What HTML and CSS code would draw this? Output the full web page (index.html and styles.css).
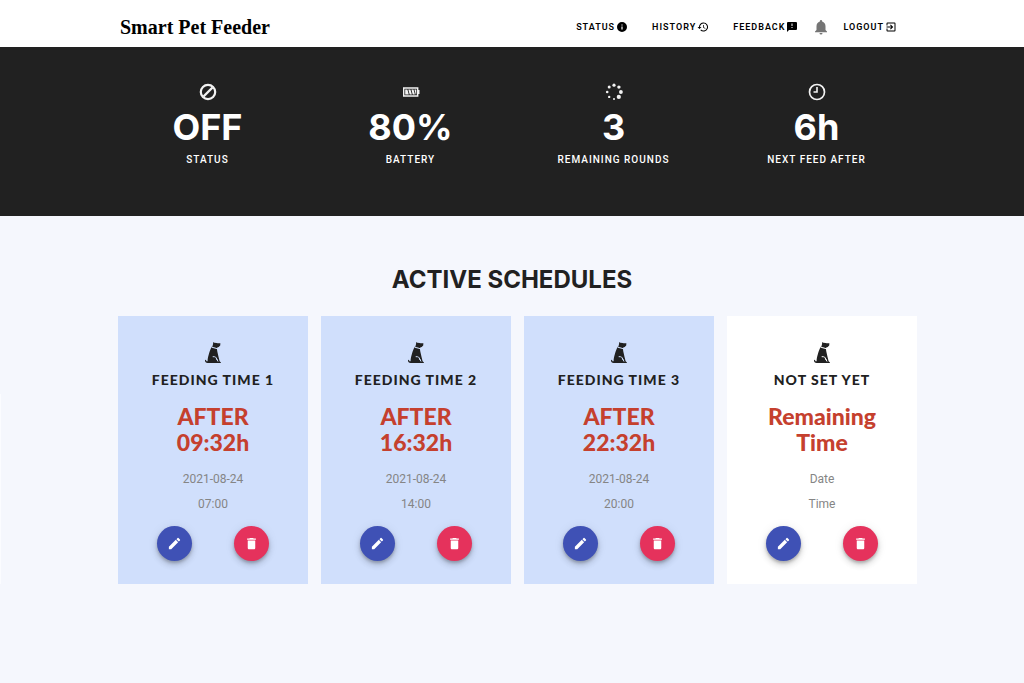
FILE: index.html
```
<!DOCTYPE html>
<html lang="en">
<head>
<meta charset="utf-8">
<meta name="viewport" content="width=device-width, initial-scale=1">
<title>Smart Pet Feeder</title>
<link rel="stylesheet" href="styles.css">
</head>
<body>
<svg class="sprite" aria-hidden="true">
  <symbol id="dog" viewBox="0 0 16 21">
    <path d="M8.300 0l1 .8 2.200.1 1.200.3 2.700.1-.2 2.200-1.500 1.600-1.500.4-.2 1-4.800-1.500.7-2.300z"/>
    <path d="M6.800 4.700l5 1.500.5 3.200 1.300 5.800 1 4 1.400 1.200-.2.600H2.600C.9 21 0 19.900 0 18.500c0-.8 1-.9 1.200-.1.100.7.600 1.100 1.400.9 0-2.900.6-4.800 1.300-7.200.8-2.800 1.500-5.200 2.900-7.400z"/>
    <path class="dog-line" d="M6.700 5.200l5.300 1.400M7.700 14.700c2.500-.3 3.800.7 4 2.300l1.300 2.500M11.300 16.500l1 1.500"/>
  </symbol>
  <symbol id="pencil" viewBox="0 0 24 24"><path d="M3 17.250V21h3.750L17.810 9.940l-3.750-3.750L3 17.250zM20.710 7.040a1 1 0 0 0 0-1.410l-2.340-2.340a1 1 0 0 0-1.410 0l-1.830 1.830 3.750 3.750 1.830-1.830z"/></symbol>
  <symbol id="trash" viewBox="0 0 24 24"><path d="M6 19c0 1.100.9 2 2 2h8c1.100 0 2-.9 2-2V7H6v12zM19 4h-3.500l-1-1h-5l-1 1H5v2h14V4z"/></symbol>
</svg>

<header class="topbar">
  <div class="container topbar-inner">
    <a class="brand" href="#">Smart Pet Feeder</a>
    <nav class="menu">
      <a class="menu-link" href="#">STATUS
        <svg class="menu-icon" viewBox="0 0 24 24"><path d="M12 2a10 10 0 1 0 0 20 10 10 0 0 0 0-20zm1.200 15h-2.400v-6h2.400v6zm0-8h-2.400V6.800h2.400V9z"/></svg></a>
      <a class="menu-link" href="#">HISTORY
        <svg class="menu-icon" viewBox="0 0 24 24"><path d="M13 3a9 9 0 0 0-9 9H1l3.890 3.890.07.14L9 12H6a7 7 0 1 1 2.060 4.940l-1.420 1.420A9 9 0 1 0 13 3zm-1 5v5l4.280 2.540.72-1.210-3.500-2.080V8H12z"/></svg></a>
      <a class="menu-link" href="#">FEEDBACK
        <svg class="menu-icon" viewBox="0 0 24 24"><path d="M20 2H4a2 2 0 0 0-2 2v18l4-4h14a2 2 0 0 0 2-2V4a2 2 0 0 0-2-2zm-7 12h-2v-2h2v2zm0-4h-2V5h2v5z"/></svg></a>
      <button class="bell" type="button" aria-label="Notifications">
        <svg viewBox="0 0 24 24"><path d="M12 22a2 2 0 0 0 2-2h-4a2 2 0 0 0 2 2zm6-6v-5c0-3.070-1.640-5.640-4.500-6.320V4a1.500 1.500 0 0 0-3 0v.68C7.630 5.360 6 7.920 6 11v5l-2 2v1h16v-1l-2-2z"/></svg></button>
      <a class="menu-link" href="#">LOGOUT
        <svg class="menu-icon" viewBox="0 0 24 24"><path d="M10.090 15.590L11.500 17l5-5-5-5-1.410 1.410L12.670 11H3v2h9.670l-2.580 2.590zM19 3H5a2 2 0 0 0-2 2v4h2V5h14v14H5v-4H3v4a2 2 0 0 0 2 2h14a2 2 0 0 0 2-2V5a2 2 0 0 0-2-2z"/></svg></a>
    </nav>
  </div>
</header>

<section class="stats">
  <div class="container columns">
    <div class="stat">
      <svg class="stat-icon" viewBox="0 0 18 18"><circle cx="9" cy="9" r="7.200" fill="none" stroke="currentColor" stroke-width="2.200"/><path d="M4.500 13.500l9-9" stroke="currentColor" stroke-width="2.400"/></svg>
      <strong class="stat-value">OFF</strong><span class="stat-label">STATUS</span>
    </div>
    <div class="stat">
      <svg class="stat-icon" viewBox="0 0 18 18"><path d="M1.700 5h14v8h-14z" fill="none" stroke="currentColor" stroke-width="1.400"/><path d="M16 7h1.500v4H16zM3.200 6.600h2.200l1.400 4.800H3.200zM6.300 6.600h2.100l1.500 4.800H7.700zM9.400 6.600h2.100l1.400 4.800h-2.200zM12.400 6.600h1.900v4.800h-.6z"/></svg>
      <strong class="stat-value">80%</strong><span class="stat-label">BATTERY</span>
    </div>
    <div class="stat">
      <svg class="stat-icon" viewBox="0 0 18 18"><circle cx="9" cy="2.200" r="1.600"/><circle cx="13.900" cy="4.100" r="1.700"/><circle cx="15.900" cy="9" r="1.900"/><circle cx="13.800" cy="13.900" r="2.100"/><circle cx="9" cy="15.900" r="1"/><circle cx="4.200" cy="13.900" r="1.200"/><circle cx="2.200" cy="9" r="1.300"/><circle cx="4.200" cy="4.100" r="1.500"/></svg>
      <strong class="stat-value">3</strong><span class="stat-label">REMAINING ROUNDS</span>
    </div>
    <div class="stat">
      <svg class="stat-icon" viewBox="0 0 18 18"><circle cx="9" cy="9" r="7.500" fill="none" stroke="currentColor" stroke-width="1.700"/><path d="M9 4v5H5.500" fill="none" stroke="currentColor" stroke-width="1.600"/></svg>
      <strong class="stat-value">6h</strong><span class="stat-label">NEXT FEED AFTER</span>
    </div>
  </div>
</section>

<main class="schedules">
  <h1 class="title">ACTIVE SCHEDULES</h1>
  <div class="carousel">
    <div class="peek"></div>
    <div class="container columns">
      <article class="card card-active">
        <svg class="dog"><use href="#dog"/></svg>
        <h2 class="card-name">FEEDING TIME 1</h2>
        <p class="remaining">AFTER<br>09:32h</p>
        <p class="when">2021-08-24</p><p class="when">07:00</p>
        <div class="actions"><button class="fab edit" type="button" aria-label="Edit"><svg><use href="#pencil"/></svg></button><button class="fab delete" type="button" aria-label="Delete"><svg><use href="#trash"/></svg></button></div>
      </article>
      <article class="card card-active">
        <svg class="dog"><use href="#dog"/></svg>
        <h2 class="card-name">FEEDING TIME 2</h2>
        <p class="remaining">AFTER<br>16:32h</p>
        <p class="when">2021-08-24</p><p class="when">14:00</p>
        <div class="actions"><button class="fab edit" type="button" aria-label="Edit"><svg><use href="#pencil"/></svg></button><button class="fab delete" type="button" aria-label="Delete"><svg><use href="#trash"/></svg></button></div>
      </article>
      <article class="card card-active">
        <svg class="dog"><use href="#dog"/></svg>
        <h2 class="card-name">FEEDING TIME 3</h2>
        <p class="remaining">AFTER<br>22:32h</p>
        <p class="when">2021-08-24</p><p class="when">20:00</p>
        <div class="actions"><button class="fab edit" type="button" aria-label="Edit"><svg><use href="#pencil"/></svg></button><button class="fab delete" type="button" aria-label="Delete"><svg><use href="#trash"/></svg></button></div>
      </article>
      <article class="card">
        <svg class="dog"><use href="#dog"/></svg>
        <h2 class="card-name">NOT SET YET</h2>
        <p class="remaining">Remaining<br>Time</p>
        <p class="when">Date</p><p class="when">Time</p>
        <div class="actions"><button class="fab edit" type="button" aria-label="Edit"><svg><use href="#pencil"/></svg></button><button class="fab delete" type="button" aria-label="Delete"><svg><use href="#trash"/></svg></button></div>
      </article>
    </div>
  </div>
</main>
</body>
</html>
```

FILE: styles.css
```
* { box-sizing: border-box; }

body {
  margin: 0;
  background: #f5f7fd;
  color: #212121;
  font-family: Inter, "Liberation Sans", sans-serif;
}

h1, h2, p { margin: 0; }
svg { fill: currentColor; }
button { border: 0; padding: 0; cursor: pointer; }

.sprite { display: none; }
.dog-line { fill: none; stroke: var(--card-color); stroke-width: 1; }

.container {
  width: 100%;
  max-width: 812px;
  margin: 0 auto;
}

.columns {
  display: grid;
  grid-template-columns: repeat(4, 1fr);
}

/* Top bar */
.topbar { background: #fff; color: #000; }

.topbar-inner {
  display: flex;
  align-items: center;
  justify-content: space-between;
  min-height: 47px;
  padding: 7px 21px 0 14px;
}

.brand {
  color: inherit;
  font: bold 20px "Liberation Serif", serif;
  text-decoration: none;
}

.menu { display: flex; align-items: center; }

.menu-link {
  display: flex;
  align-items: center;
  gap: 1px;
  margin-left: 24px;
  color: inherit;
  font: 600 9px Roboto, sans-serif;
  letter-spacing: 1px;
  text-decoration: none;
}

.menu-icon { width: 12px; height: 12px; }

.bell {
  display: flex;
  margin-left: 14px;
  background: none;
  color: #757575;
}
.bell svg { width: 18px; height: 18px; }
.bell + .menu-link { margin-left: 13px; }

/* Stats */
.stats {
  padding: 36px 0 49px;
  background: #212121;
  color: #fff;
}

.stat {
  display: flex;
  flex-direction: column;
  align-items: center;
}

.stat-icon { width: 18px; height: 18px; color: #f2f2f2; }

.stat-value {
  font-size: 36px;
  font-weight: 700;
  line-height: 52px;
}

.stat-label {
  font: 500 10px/14px Roboto, sans-serif;
  letter-spacing: 1px;
}

/* Schedules */
.schedules { padding: 48px 0 96px; }

.title {
  margin-bottom: 20px;
  font-size: 24px;
  font-weight: 700;
  line-height: 32px;
  text-align: center;
}

.carousel { display: flex; align-items: flex-end; }

.peek {
  width: 1px;
  height: 190px;
  margin-right: -1px;
  background: #fbfcff;
}

.card {
  --card-color: #fff;
  display: flex;
  flex-direction: column;
  align-items: center;
  margin: 0 1px 0 12px;
  padding: 26px 0 23px;
  background: var(--card-color);
}
.card-active { --card-color: #d0dffc; }

.dog { width: 16px; height: 21px; }

.card-name {
  margin-top: 8px;
  font: 900 14px/18px Lato, sans-serif;
  letter-spacing: 1px;
}

.remaining {
  margin: 14px 0 12px;
  color: #c5402e;
  font: 900 23px/26px Lato, sans-serif;
  text-align: center;
}

.when {
  color: #858585;
  font: 12px/25px Roboto, sans-serif;
}

.actions {
  display: flex;
  gap: 42px;
  margin-top: 9px;
}

.fab {
  display: grid;
  place-items: center;
  width: 35px;
  height: 35px;
  border-radius: 50%;
  color: #fff;
  box-shadow: 0 2px 3px rgba(0, 0, 0, .2), 0 4px 6px rgba(0, 0, 0, .14), 0 1px 11px rgba(0, 0, 0, .08);
}
.fab svg { width: 15px; height: 15px; }
.edit { background: #3f51b5; }
.delete { background: #e5325c; }
```
